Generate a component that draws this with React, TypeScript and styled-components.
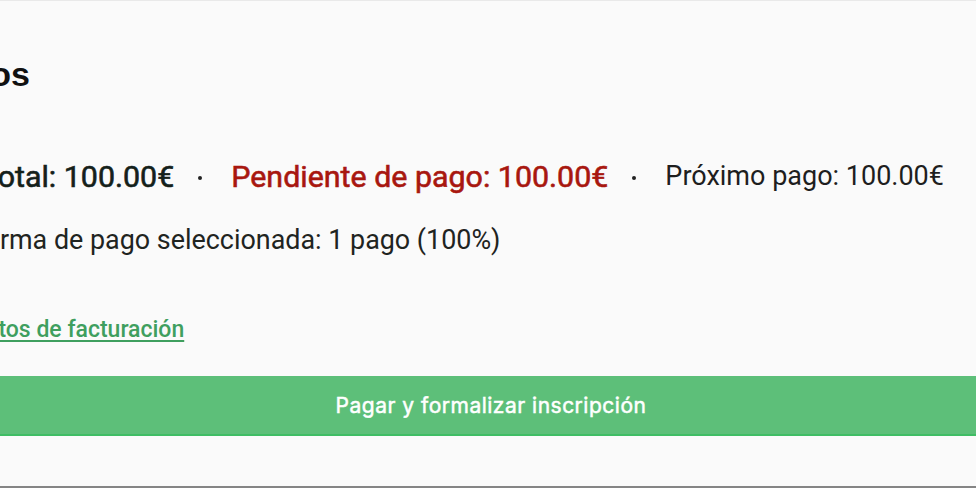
import React from "react";
import styled, { createGlobalStyle } from "styled-components";

const Global = createGlobalStyle`
  html, body { margin: 0; padding: 0; background: #fafafa; overflow: hidden; }
  body { width: 976px; height: 488px; }
`;

const Frame = styled.div`
  position: relative;
  width: 976px;
  height: 488px;
  box-sizing: border-box;
  border-top: 1px solid #e9e9e9;
  border-bottom: 2px solid #858585;
  overflow: hidden;
  background: #fafafa;
`;

const Page = styled.div`
  width: 1142px;
  margin-left: -80px;
  display: flex;
  flex-direction: column;
`;

const Title = styled.h2`
  margin: 50px 0 0;
  padding-left: 8px;
  font-family: "Liberation Sans", Arial, sans-serif;
  font-weight: 700;
  font-size: 34px;
  line-height: 46px;
  color: #111;
`;

const Summary = styled.div<{ $indent: number }>`
  display: flex;
  align-items: center;
  margin-top: 61px;
  padding-left: ${(p) => p.$indent}px;
  height: 36px;
  font-family: Roboto, "Noto Sans", sans-serif;
  white-space: nowrap;
`;

const Amount = styled.span<{ $tone: "total" | "due" | "next" }>`
  font-size: ${(p) => (p.$tone === "next" ? 27 : 30.4)}px;
  font-weight: 400;
  -webkit-text-stroke: ${(p) => (p.$tone === "next" ? "0" : "0.6px currentColor")};
  color: ${(p) =>
    p.$tone === "due" ? "#a8170f" : p.$tone === "total" ? "#14201a" : "#1e1e1e"};
`;

const Dot = styled.span`
  width: 4px;
  height: 4px;
  border-radius: 50%;
  background: #222;
  margin: 4px 29px 0 24px;
`;

const Info = styled.p<{ $indent: number }>`
  margin: 31px 0 0;
  padding-left: ${(p) => p.$indent}px;
  font-family: Roboto, "Noto Sans", sans-serif;
  font-size: 26.9px;
  line-height: 30px;
  color: #1f2421;
  white-space: nowrap;
`;

const BillingLink = styled.a<{ $indent: number }>`
  display: block;
  margin-top: 60px;
  padding-left: ${(p) => p.$indent}px;
  font-family: Roboto, "Noto Sans", sans-serif;
  font-weight: 500;
  font-size: 23px;
  line-height: 30px;
  color: #3f9f5f;
  text-decoration: underline;
  text-underline-offset: 3px;
  text-decoration-thickness: 2px;
  cursor: pointer;
  white-space: nowrap;
`;

const PayButton = styled.button`
  margin-top: 31px;
  height: 60px;
  width: 100%;
  border: none;
  border-bottom: 2px solid #3fbd64;
  background: #5dbf79;
  color: #fff;
  font-family: Inter, "Liberation Sans", Arial, sans-serif;
  font-weight: 400;
  -webkit-text-stroke: 0.5px #fff;
  font-size: 21px;
  letter-spacing: 0.5px;
  cursor: pointer;
`;

export default function App() {
  return (
    <>
      <Global />
      <Frame>
        <Page>
          <Title>Pagos</Title>
          <Summary $indent={61}>
            <Amount $tone="total">Total: 100.00€</Amount>
            <Dot />
            <Amount $tone="due">Pendiente de pago: 100.00€</Amount>
            <Dot />
            <Amount $tone="next">Próximo pago: 100.00€</Amount>
          </Summary>
          <Info $indent={50}>Forma de pago seleccionada: 1 pago (100%)</Info>
          <BillingLink $indent={51}>Datos de facturación</BillingLink>
          <PayButton>Pagar y formalizar inscripción</PayButton>
        </Page>
      </Frame>
    </>
  );
}
